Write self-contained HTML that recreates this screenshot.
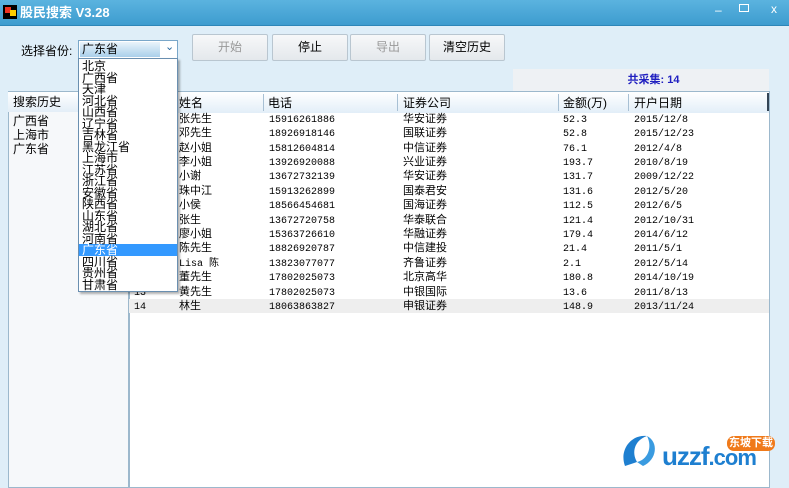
<!DOCTYPE html>
<html><head><meta charset="utf-8"><style>
*{margin:0;padding:0;box-sizing:border-box}
body{width:789px;height:488px;overflow:hidden;background:#dfeef8;font-family:"Liberation Sans","Noto Sans CJK SC",sans-serif;font-size:12px;line-height:14px;color:#000;position:relative}
.a{position:absolute;white-space:nowrap}
.title{left:0;top:0;width:789px;height:26px;background:linear-gradient(#5bb3df,#3d9ccf);border-bottom:1px solid #2d86b8}
.btn{position:absolute;top:34px;height:27px;border:1px solid #b9c6d0;border-radius:2px;background:linear-gradient(#f7f8f9,#e4e8ec);text-align:center;line-height:25px;font-size:12px}
.row{position:absolute;left:129px;width:640px;height:14px;font-size:11px;line-height:14px}
.row span{position:absolute;top:0;line-height:14px;height:14px}
.row span.mono{top:2px}
.mono{font-family:"Liberation Mono","Noto Sans CJK SC",monospace;font-size:10px}
.dd div{height:11.5px;line-height:11.5px;font-size:12px;padding-left:3px;font-family:"Noto Sans CJK SC",sans-serif;overflow:visible}
</style></head><body>
<div class="a title"></div>
<div class="a" style="left:3px;top:5px;width:14px;height:14px;background:#000"></div>
<div class="a" style="left:5px;top:7px;width:6px;height:6px;background:#e32"></div>
<div class="a" style="left:10px;top:10px;width:6px;height:6px;background:#fc0"></div>
<div class="a" style="left:20px;top:4px;color:#fff;font-size:13px;font-weight:bold;line-height:18px">股民搜索 V3.28</div>
<div class="a" style="left:708px;top:0;width:81px;height:24px;color:#fff;font-size:12px">
<span class="a" style="left:7px;top:3px">‒</span><span class="a" style="left:31px;top:4px;width:10px;height:8px;border:1.5px solid #fff"></span><span class="a" style="left:63px;top:2px">x</span></div>

<div class="a" style="left:21px;top:44px;font-size:12px">选择省份:</div>
<div class="a" style="left:78px;top:40px;width:100px;height:19px;border:1px solid #7aa7c9;background:#fff"></div>
<div class="a" style="left:80px;top:42px;width:80px;height:15px;background:linear-gradient(#eaf4fb,#a9cfea)"></div>
<div class="a" style="left:82px;top:42px;font-size:12px;line-height:15px">广东省</div>
<div class="a" style="left:165px;top:40px;color:#2a6aa0;font-size:11px">⌄</div>

<div class="btn" style="left:192px;width:76px;color:#999">开始</div>
<div class="btn" style="left:272px;width:76px">停止</div>
<div class="btn" style="left:350px;width:76px;color:#999">导出</div>
<div class="btn" style="left:429px;width:76px">清空历史</div>

<div class="a" style="left:513px;top:69px;width:256px;height:23px;background:#eef1f4;color:#2020c0;font-size:11px;font-weight:bold;text-align:center;line-height:23px;padding-left:25px">共采集: 14</div>

<div class="a" style="left:8px;top:91px;width:121px;height:397px;background:#f6f8fa;border:1px solid #9cb8cc"></div>
<div class="a" style="left:8px;top:92px;width:120px;height:20px;background:linear-gradient(#fff,#e3eef7)"></div>
<div class="a" style="left:13px;top:95px">搜索历史</div>
<div class="a" style="left:13px;top:114px;line-height:14px">广西省<br>上海市<br>广东省</div>

<div class="a" style="left:129px;top:91px;width:641px;height:397px;background:#fff;border:1px solid #9cb8cc"></div>
<div class="a" style="left:130px;top:92px;width:639px;height:21px;background:linear-gradient(#fff,#e2eef8)"></div>
<div class="a" style="left:767px;top:93px;width:2px;height:18px;background:#345"></div>
<div class="a" style="left:179px;top:96px">姓名</div>
<div class="a" style="left:263px;top:94px;width:1px;height:17px;background:#a8c0d4"></div><div class="a" style="left:268px;top:96px">电话</div>
<div class="a" style="left:397px;top:94px;width:1px;height:17px;background:#a8c0d4"></div><div class="a" style="left:403px;top:96px">证券公司</div>
<div class="a" style="left:558px;top:94px;width:1px;height:17px;background:#a8c0d4"></div><div class="a" style="left:563px;top:96px">金额(万)</div>
<div class="a" style="left:628px;top:94px;width:1px;height:17px;background:#a8c0d4"></div><div class="a" style="left:634px;top:96px">开户日期</div>

<div class="row" style="top:112px"><span style="left:50px">张先生</span><span class="mono" style="left:140px">15916261886</span><span style="left:274px">华安证券</span><span class="mono" style="left:434px">52.3</span><span class="mono" style="left:505px">2015/12/8</span></div>
<div class="row" style="top:126px"><span style="left:50px">邓先生</span><span class="mono" style="left:140px">18926918146</span><span style="left:274px">国联证券</span><span class="mono" style="left:434px">52.8</span><span class="mono" style="left:505px">2015/12/23</span></div>
<div class="row" style="top:141px"><span style="left:50px">赵小姐</span><span class="mono" style="left:140px">15812604814</span><span style="left:274px">中信证券</span><span class="mono" style="left:434px">76.1</span><span class="mono" style="left:505px">2012/4/8</span></div>
<div class="row" style="top:155px"><span style="left:50px">李小姐</span><span class="mono" style="left:140px">13926920088</span><span style="left:274px">兴业证券</span><span class="mono" style="left:434px">193.7</span><span class="mono" style="left:505px">2010/8/19</span></div>
<div class="row" style="top:169px"><span style="left:50px">小谢</span><span class="mono" style="left:140px">13672732139</span><span style="left:274px">华安证券</span><span class="mono" style="left:434px">131.7</span><span class="mono" style="left:505px">2009/12/22</span></div>
<div class="row" style="top:184px"><span style="left:50px">珠中江</span><span class="mono" style="left:140px">15913262899</span><span style="left:274px">国泰君安</span><span class="mono" style="left:434px">131.6</span><span class="mono" style="left:505px">2012/5/20</span></div>
<div class="row" style="top:198px"><span style="left:50px">小侯</span><span class="mono" style="left:140px">18566454681</span><span style="left:274px">国海证券</span><span class="mono" style="left:434px">112.5</span><span class="mono" style="left:505px">2012/6/5</span></div>
<div class="row" style="top:213px"><span style="left:50px">张生</span><span class="mono" style="left:140px">13672720758</span><span style="left:274px">华泰联合</span><span class="mono" style="left:434px">121.4</span><span class="mono" style="left:505px">2012/10/31</span></div>
<div class="row" style="top:227px"><span style="left:50px">廖小姐</span><span class="mono" style="left:140px">15363726610</span><span style="left:274px">华融证券</span><span class="mono" style="left:434px">179.4</span><span class="mono" style="left:505px">2014/6/12</span></div>
<div class="row" style="top:241px"><span style="left:50px">陈先生</span><span class="mono" style="left:140px">18826920787</span><span style="left:274px">中信建投</span><span class="mono" style="left:434px">21.4</span><span class="mono" style="left:505px">2011/5/1</span></div>
<div class="row" style="top:256px"><span class="mono" style="left:50px">Lisa 陈</span><span class="mono" style="left:140px">13823077077</span><span style="left:274px">齐鲁证券</span><span class="mono" style="left:434px">2.1</span><span class="mono" style="left:505px">2012/5/14</span></div>
<div class="row" style="top:270px"><span style="left:50px">董先生</span><span class="mono" style="left:140px">17802025073</span><span style="left:274px">北京高华</span><span class="mono" style="left:434px">180.8</span><span class="mono" style="left:505px">2014/10/19</span></div>
<div class="row" style="top:285px"><span class="mono" style="left:5px">13</span><span style="left:50px">黄先生</span><span class="mono" style="left:140px">17802025073</span><span style="left:274px">中银国际</span><span class="mono" style="left:434px">13.6</span><span class="mono" style="left:505px">2011/8/13</span></div>
<div class="row" style="top:299px;background:#eeeeee"><span class="mono" style="left:5px">14</span><span style="left:50px">林生</span><span class="mono" style="left:140px">18063863827</span><span style="left:274px">申银证券</span><span class="mono" style="left:434px">148.9</span><span class="mono" style="left:505px">2013/11/24</span></div>

<div class="a dd" style="left:78px;top:58px;width:100px;height:234px;background:#fff;border:1px solid #6a8fb0;box-shadow:2px 2px 2px rgba(0,0,0,.3);padding-top:1px">
<div>北京</div><div>广西省</div><div>天津</div><div>河北省</div><div>山西省</div><div>辽宁省</div><div>吉林省</div><div>黑龙江省</div><div>上海市</div><div>江苏省</div><div>浙江省</div><div>安徽省</div><div>陕西省</div><div>山东省</div><div>湖北省</div><div>河南省</div><div style="background:#3399ff;color:#fff">广东省</div><div>四川省</div><div>贵州省</div><div>甘肃省</div></div>

<div class="a" style="left:617px;top:430px;width:48px;height:40px">
<svg width="48" height="40"><path d="M8 36 C2 20 14 4 30 6 C18 10 14 22 20 32 Z" fill="#1e7fd0"/><path d="M20 32 C30 30 36 18 30 6 C42 12 40 30 26 36 Z" fill="#3a9be0"/></svg></div>
<div class="a" style="left:662px;top:442px;font-size:26px;line-height:28px;font-weight:bold;color:#1e7fd0;letter-spacing:-1px;font-family:'Liberation Sans',sans-serif">uzzf<span style="font-size:22px">.com</span></div>
<div class="a" style="left:727px;top:436px;width:48px;height:15px;background:#f07a1a;border-radius:7px;color:#fff;font-size:11px;font-weight:bold;text-align:center;line-height:15px">东坡下载</div>
</body></html>
